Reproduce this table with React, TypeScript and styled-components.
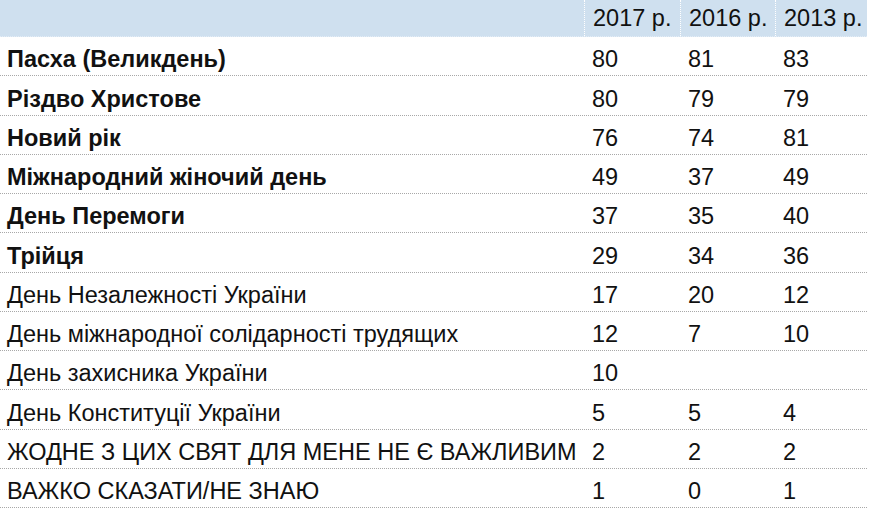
import React from 'react';
import styled, { createGlobalStyle } from 'styled-components';

const GlobalStyle = createGlobalStyle`
  html, body {
    margin: 0;
    padding: 0;
    background: #ffffff;
  }
  body {
    font-family: "Liberation Sans", Arial, sans-serif;
    color: #111111;
  }
`;

type Row = {
  readonly label: string;
  readonly bold?: boolean;
  readonly values: readonly (number | null)[];
};

const years = ['2017 р.', '2016 р.', '2013 р.'];

const rows: Row[] = [
  { label: 'Пасха (Великдень)', bold: true, values: [80, 81, 83] },
  { label: 'Різдво Христове', bold: true, values: [80, 79, 79] },
  { label: 'Новий рік', bold: true, values: [76, 74, 81] },
  { label: 'Міжнародний жіночий день', bold: true, values: [49, 37, 49] },
  { label: 'День Перемоги', bold: true, values: [37, 35, 40] },
  { label: 'Трійця', bold: true, values: [29, 34, 36] },
  { label: 'День Незалежності України', values: [17, 20, 12] },
  { label: 'День міжнародної солідарності трудящих', values: [12, 7, 10] },
  { label: 'День захисника України', values: [10, null, null] },
  { label: 'День Конституції України', values: [5, 5, 4] },
  { label: 'ЖОДНЕ З ЦИХ СВЯТ ДЛЯ МЕНЕ НЕ Є ВАЖЛИВИМ', values: [2, 2, 2] },
  { label: 'ВАЖКО СКАЗАТИ/НЕ ЗНАЮ', values: [1, 0, 1] },
];

const columns = '584px 96px 95px 92px';

const Styled = {
  Table: styled.div`
    width: 867px;
    display: flex;
    flex-direction: column;
    font-size: 23.5px;
    line-height: 1;
  `,
  Head: styled.div`
    display: grid;
    grid-template-columns: ${columns};
    height: 37px;
    background: #cfe0ef;
    border-bottom: 1px dotted #e4edf6;
    box-sizing: border-box;
  `,
  HeadCell: styled.div<{ $first?: boolean }>`
    display: flex;
    align-items: center;
    padding: 1px 0 0 8px;
    white-space: nowrap;
    border-left: ${({ $first }) => ($first ? 'none' : '1px dotted #ffffff')};
  `,
  Row: styled.div`
    display: grid;
    grid-template-columns: ${columns};
    height: 39.25px;
    border-bottom: 1px dotted #a8a8a8;
    box-sizing: border-box;
  `,
  Cell: styled.div<{ $bold?: boolean; $label?: boolean }>`
    display: flex;
    align-items: center;
    padding: 8px 0 0 ${({ $label }) => ($label ? '7px' : '8px')};
    font-weight: ${({ $bold }) => ($bold ? 'bold' : 'normal')};
    white-space: nowrap;
  `,
};

const App = () => (
  <>
    <GlobalStyle />
    <Styled.Table>
      <Styled.Head>
        <Styled.HeadCell $first />
        {years.map((y) => (
          <Styled.HeadCell key={y}>{y}</Styled.HeadCell>
        ))}
      </Styled.Head>
      {rows.map((r) => (
        <Styled.Row key={r.label}>
          <Styled.Cell $label $bold={r.bold}>
            {r.label}
          </Styled.Cell>
          {r.values.map((v, i) => (
            <Styled.Cell key={i}>{v ?? ''}</Styled.Cell>
          ))}
        </Styled.Row>
      ))}
    </Styled.Table>
  </>
);

export default App;
